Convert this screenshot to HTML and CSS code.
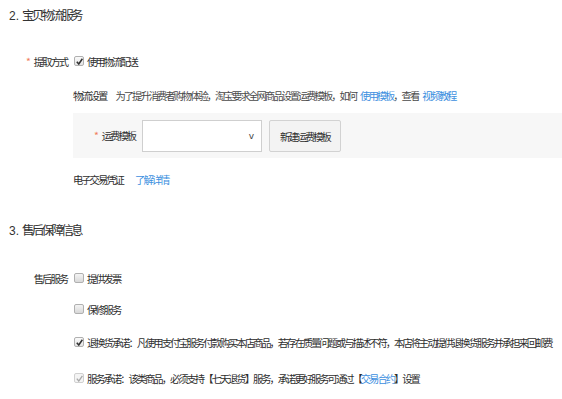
FILE: index.html
```html
<!DOCTYPE html>
<html lang="zh-CN">
<head>
<meta charset="utf-8">
<title>宝贝物流服务</title>
<link rel="stylesheet" href="styles.css">
</head>
<body>
<div class="page">
  <h2 class="sec-title"><span class="num">2.</span>宝贝物流服务</h2>

  <div class="row r-pick">
    <div class="label"><span class="req">*</span>提取方式</div>
    <div class="field">
      <span class="cb checked"><svg viewBox="0 0 10 10" width="9" height="9"><path d="M2 5.2 L4.2 7.8 L8.2 2" fill="none" stroke="#333" stroke-width="1.7"/></svg></span>
      <span class="cb-text">使用物流配送</span>
    </div>
  </div>

  <div class="sub r-ship">
    <span class="sub-label">物流设置</span>
    <span class="hint">为了提升消费者购物体验，淘宝要求全网商品设置运费模板，如何<a class="link">使用模板</a>，查看<a class="link">视频教程</a></span>
  </div>

  <div class="tpl-box">
    <div class="tpl-label"><span class="req">*</span>运费模板</div>
    <div class="select"><span class="arrow">v</span></div>
    <button class="btn">新建运费模板</button>
  </div>

  <div class="sub r-ecert">
    <span class="sub-label">电子交易凭证</span>
    <a class="link">了解详情</a>
  </div>

  <h2 class="sec-title t2"><span class="num">3.</span>售后保障信息</h2>

  <div class="row r-svc">
    <div class="label">售后服务</div>
    <div class="field">
      <span class="cb"></span>
      <span class="cb-text">提供发票</span>
    </div>
  </div>

  <div class="row r-warr">
    <div class="label"></div>
    <div class="field">
      <span class="cb"></span>
      <span class="cb-text">保修服务</span>
    </div>
  </div>

  <div class="row r-ret">
    <div class="label"></div>
    <div class="field">
      <span class="cb checked"><svg viewBox="0 0 10 10" width="9" height="9"><path d="M2 5.2 L4.2 7.8 L8.2 2" fill="none" stroke="#333" stroke-width="1.7"/></svg></span>
      <span class="cb-text">退换货承诺：凡使用支付宝服务付款购买本店商品，若存在质量问题或与描述不符，本店将主动提供退换货服务并承担来回邮费</span>
    </div>
  </div>

  <div class="row r-prom">
    <div class="label"></div>
    <div class="field">
      <span class="cb checked disabled"><svg viewBox="0 0 10 10" width="9" height="9"><path d="M2 5.2 L4.2 7.8 L8.2 2" fill="none" stroke="#a8a8a8" stroke-width="1.5"/></svg></span>
      <span class="cb-text">服务承诺：该类商品，必须支持【七天退货】服务，承诺更好服务可通过【<a class="link">交易合约</a>】设置</span>
    </div>
  </div>
</div>
</body>
</html>
```

FILE: styles.css
```css
html, body {
  margin: 0;
  padding: 0;
  background: #ffffff;
}

body {
  font-family: "Noto Sans CJK SC", "Noto Sans", sans-serif;
  color: #2e2e2e;
  font-size: 10.3px;
  letter-spacing: -2px;
}

.page {
  width: 562px;
  height: 399px;
  overflow: hidden;
  display: flex;
  flex-direction: column;
}

.sec-title {
  margin: 0;
  padding-left: 9px;
  height: 30px;
  line-height: 30px;
  font-size: 12.5px;
  font-weight: normal;
  letter-spacing: -2.7px;
  color: #333333;
  white-space: nowrap;
}

.num {
  font-family: "Liberation Sans", sans-serif;
  font-size: 12px;
  letter-spacing: 0;
  margin-right: 3px;
}

.t2 { margin-top: 25px; }

.row {
  display: flex;
  align-items: center;
  height: 20px;
  white-space: nowrap;
}

.label {
  width: 67px;
  flex: none;
  text-align: right;
}

.req {
  color: #f07a5a;
  margin-right: 3px;
  letter-spacing: 0;
}

.field {
  display: flex;
  align-items: center;
  margin-left: 7px;
}

.cb {
  flex: none;
  width: 8px;
  height: 8px;
  border: 1px solid #b0b0b0;
  border-radius: 2px;
  background: linear-gradient(#f4f4f4, #d8d8d8);
  display: flex;
  align-items: center;
  justify-content: center;
  overflow: hidden;
}

.cb.checked {
  background: linear-gradient(#fafafa, #e4e4e4);
}

.cb.disabled {
  border-color: #d0d0d0;
  background: #f4f4f4;
}

.cb svg { display: block; flex: none; }

.cb-text { margin-left: 3px; }

.r-pick { margin-top: 21px; }
.r-svc { margin-top: 23px; }
.r-warr { margin-top: 11px; }
.r-ret { margin-top: 13px; }
.r-prom { margin-top: 16px; }

.sub {
  height: 20px;
  line-height: 20px;
  padding-left: 73px;
  white-space: nowrap;
}

.r-ship { margin-top: 15px; }
.r-ecert { margin-top: 12px; }

.sub-label {
  color: #2e2e2e;
  margin-right: 9px;
}

.r-ecert .sub-label { margin-right: 12px; }

.hint { color: #4a4a4a; }

.hint .link { margin-left: 4px; }

.link {
  color: #3d8fe0;
  text-decoration: none;
}

.tpl-box {
  margin-top: 7px;
  margin-left: 73px;
  height: 45px;
  background: #f7f7f7;
  display: flex;
  align-items: flex-start;
  padding-top: 7px;
  box-sizing: border-box;
  white-space: nowrap;
}

.tpl-label {
  width: 62px;
  flex: none;
  text-align: right;
  height: 32px;
  line-height: 32px;
}

.select {
  margin-left: 7px;
  width: 120px;
  height: 32px;
  box-sizing: border-box;
  border: 1px solid #cfcfcf;
  background: #ffffff;
  display: flex;
  align-items: center;
  justify-content: flex-end;
  padding-right: 7px;
}

.arrow {
  font-family: "DejaVu Sans", sans-serif;
  font-size: 9px;
  letter-spacing: 0;
  color: #444;
}

.btn {
  margin: 0 0 0 7px;
  padding: 0;
  width: 72px;
  height: 32px;
  box-sizing: border-box;
  border: 1px solid #d2d2d2;
  border-radius: 2px;
  background: #f3f3f3;
  font-family: inherit;
  font-size: 10.3px;
  letter-spacing: -2px;
  color: #2e2e2e;
}
```
